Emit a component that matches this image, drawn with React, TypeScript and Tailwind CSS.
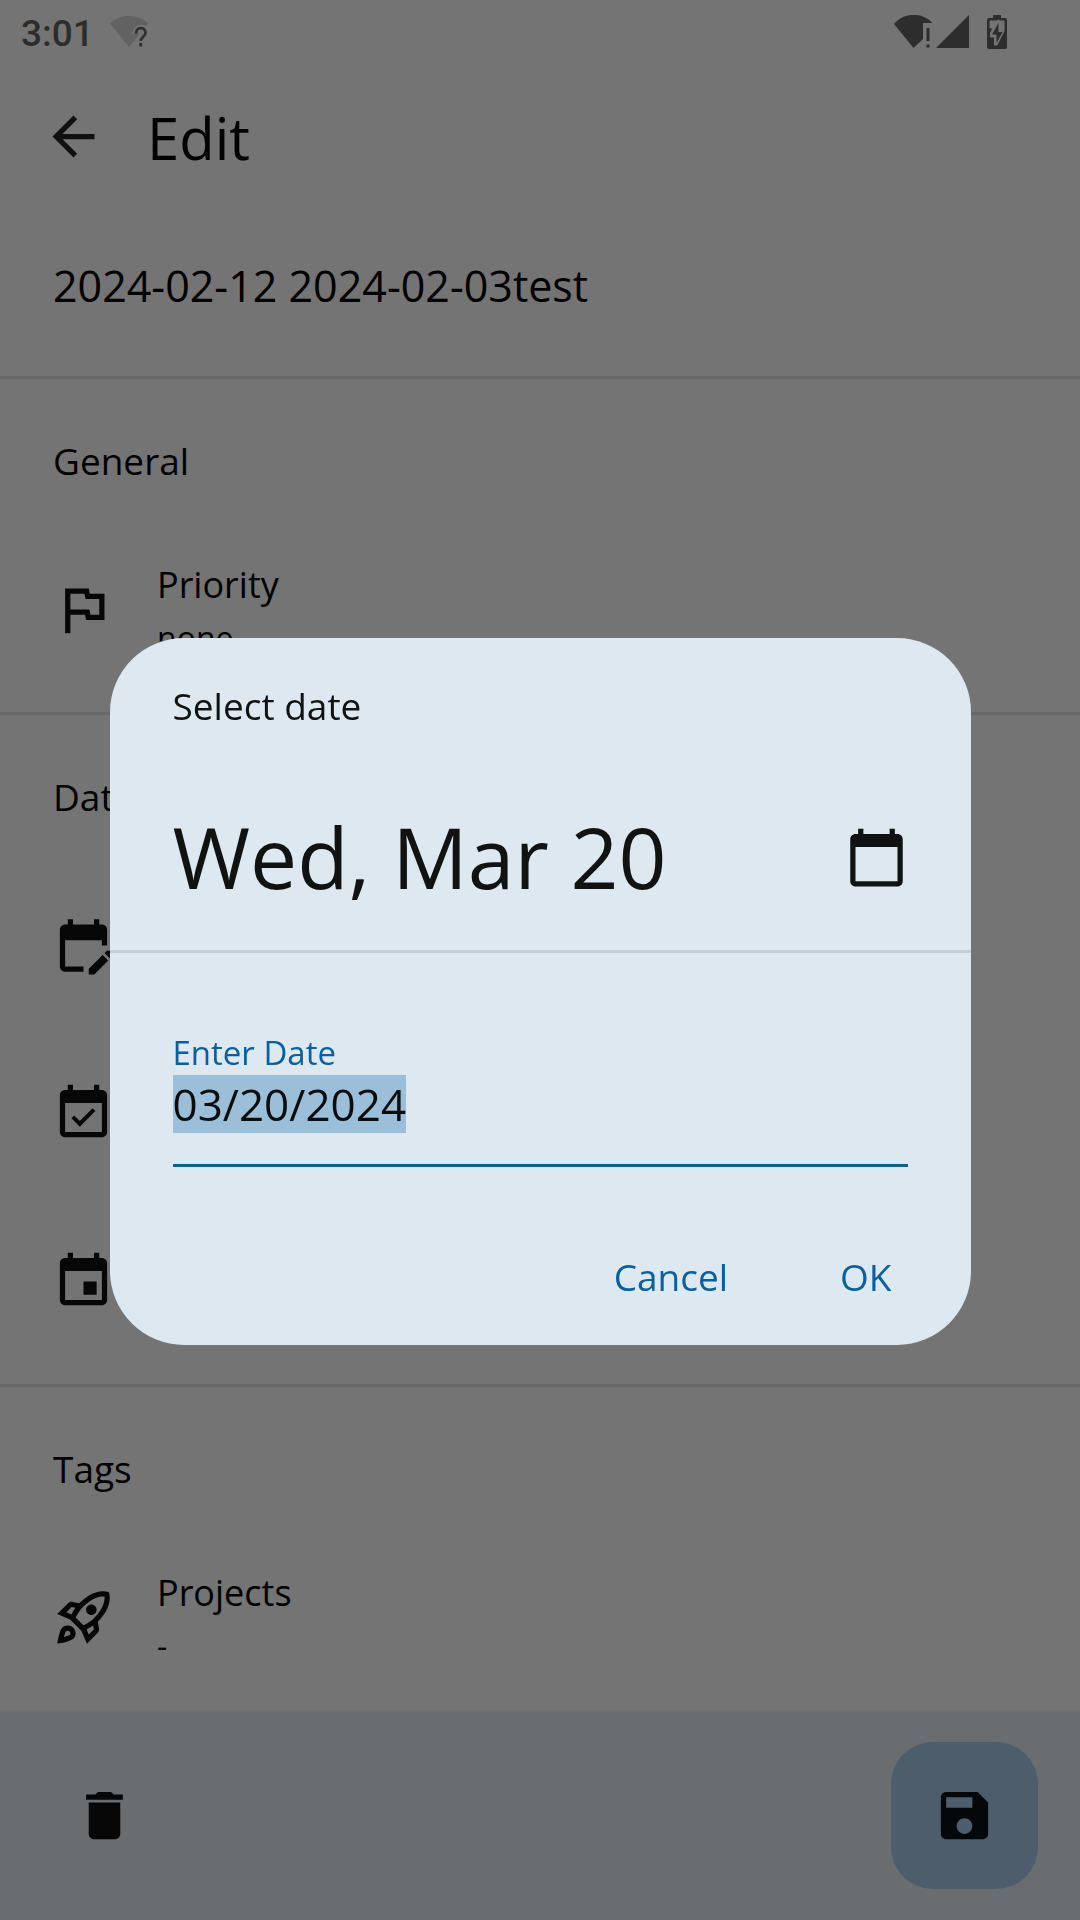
import { useEffect, useRef, useState } from "react";
import type { ReactNode } from "react";

const paths = {
  back: "M20 11H7.83l5.59-5.59L12 4l-8 8 8 8 1.41-1.41L7.83 13H20v-2z",
  flag: "M12.36 6l.4 2H18v6h-3.36l-.4-2H7V6h5.36M14 4H5v17h2v-7h5.6l.4 2h7V6h-5.6L14 4z",
  editCalendar:
    "M12 22H5c-1.11 0-2-.9-2-2L3.01 6c0-1.1.88-2 1.99-2h1V2h2v2h8V2h2v2h1c1.1 0 2 .9 2 2v6h-2v-2H5v10h7v2zm10.13-5.01l.71-.71c.39-.39.39-1.02 0-1.41l-.71-.71c-.39-.39-1.02-.39-1.41 0l-.71.71 2.12 2.12zm-.71.71l-5.3 5.3H14v-2.12l5.3-5.3 2.12 2.12z",
  eventAvailable:
    "M16.53 11.06L15.47 10l-4.88 4.88-2.12-2.12-1.06 1.06L10.59 17l5.94-5.94zM19 3h-1V1h-2v2H8V1H6v2H5c-1.11 0-1.99.9-1.99 2L3 19c0 1.1.89 2 2 2h14c1.1 0 2-.9 2-2V5c0-1.1-.9-2-2-2zm0 16H5V8h14v11z",
  event:
    "M17 12h-5v5h5v-5zM16 1v2H8V1H6v2H5c-1.11 0-1.99.9-1.99 2L3 19c0 1.1.89 2 2 2h14c1.1 0 2-.9 2-2V5c0-1.1-.9-2-2-2h-1V1h-2zm3 18H5V8h14v11z",
  calendar:
    "M20 3h-1V1h-2v2H7V1H5v2H4c-1.1 0-2 .9-2 2v16c0 1.1.9 2 2 2h16c1.1 0 2-.9 2-2V5c0-1.1-.9-2-2-2zm0 18H4V8h16v13z",
  trash: "M6 19c0 1.1.9 2 2 2h8c1.1 0 2-.9 2-2V7H6v12zM19 4h-3.5l-1-1h-5l-1 1H5v2h14V4z",
  save: "M17 3H5c-1.11 0-2 .9-2 2v14c0 1.1.89 2 2 2h14c1.1 0 2-.9 2-2V7l-4-4zm-5 16c-1.66 0-3-1.34-3-3s1.34-3 3-3 3 1.34 3 3-1.34 3-3 3zm3-10H5V5h10v4z",
  rocket:
    "M6 15c-.83 0-1.58.34-2.12.88C2.7 17.06 2 22 2 22s4.94-.7 6.12-1.88C8.66 19.58 9 18.83 9 18c0-1.66-1.34-3-3-3zm.71 3.71c-.28.28-2.17.76-2.17.76s.47-1.88.76-2.17c.17-.19.42-.3.7-.3.55 0 1 .45 1 1 0 .28-.11.53-.29.71zM17.42 13.65c6.36-6.36 4.24-11.31 4.24-11.31s-4.95-2.12-11.31 4.24l-2.49-.5c-.65-.13-1.33.08-1.81.55L2 10.69l5 2.14L11.17 17l2.14 5 4.05-4.05c.47-.47.68-1.15.55-1.81l-.49-2.49zM7.41 10.83l-1.91-.82 1.97-1.97 1.44.29c-.57.83-1.08 1.7-1.5 2.5zm6.58 7.67l-.82-1.91c.8-.42 1.67-.93 2.49-1.5l.29 1.44-1.96 1.97zM16 12.24c-1.32 1.32-3.38 2.4-4.04 2.73l-2.93-2.93c.32-.65 1.4-2.71 2.73-4.04 4.68-4.68 8.23-3.99 8.23-3.99s.69 3.55-3.99 8.23zM15 11c1.1 0 2-.9 2-2s-.9-2-2-2-2 .9-2 2 .9 2 2 2z",
};

function Icon({ name }: { name: keyof typeof paths }) {
  return (
    <svg viewBox="0 0 24 24" className="size-[63px] shrink-0" fill="currentColor" aria-hidden="true">
      <path d={paths[name]} />
    </svg>
  );
}

function StatusBar() {
  return (
    <div className="flex h-[63px] items-center pr-[73px] pl-[21px] text-[#2d2d2d]">
      <span className="pt-1 font-[Roboto,sans-serif] text-[37px] leading-[44px] font-medium">3:01</span>
      <svg width="38" height="32" viewBox="0 0 38 32" className="ml-[16px]" aria-hidden="true">
        <path d="M0 7.500C10-2.500 28-2.500 38 7.500L19 31Z" fill="#626262" />
        <path
          d="M26 17.500c0-7 9.500-7 9.500-.8 0 4.200-4.800 4.300-4.800 8.800"
          stroke="#747474"
          strokeWidth="7"
          fill="none"
        />
        <path
          d="M26 17.500c0-7 9.500-7 9.500-.8 0 4.200-4.800 4.300-4.800 8.300M30.700 27v3.500"
          stroke="#303030"
          strokeWidth="2.800"
          fill="none"
        />
      </svg>
      <svg width="38" height="33" viewBox="0 0 38 33" className="ml-auto" fill="currentColor" aria-hidden="true">
        <path d="M0 9C10-3 28-3 38 7.500V8H29v16L19.500 33Z" />
        <path d="M32.500 13h3v13h-3zM32.500 29.500h3v3h-3z" />
      </svg>
      <svg width="33" height="33" viewBox="0 0 33 33" className="ml-1" fill="currentColor" aria-hidden="true">
        <path d="M33 0v33H0Z" />
      </svg>
      <svg width="20" height="34" viewBox="0 0 20 34" className="ml-[18px]" aria-hidden="true">
        <path
          d="M6 0h8v3h4a2 2 0 0 1 2 2v27a2 2 0 0 1-2 2H2a2 2 0 0 1-2-2V5a2 2 0 0 1 2-2h4z"
          fill="currentColor"
        />
        <path
          d="M3 6H9.500L12 5V6H17V16L10 30H7.500V22H3.500V18L6 13H3Z"
          fill="#747474"
          stroke="#747474"
          strokeLinejoin="round"
        />
        <path d="M11.500 8 5 19.500h4.500v8.500L15.500 17h-4z" fill="currentColor" />
      </svg>
    </div>
  );
}

function Section({ title, children }: { title: string; children: ReactNode }) {
  return (
    <section className="border-t-3 border-[#686868] pb-[19px]">
      <h2 className="px-[53px] pt-14 pb-[38px] text-[37px] leading-[52px]">{title}</h2>
      {children}
    </section>
  );
}

interface RowProps {
  icon: keyof typeof paths;
  name: string;
  label?: string;
  value?: string;
}

function Row({ icon, name, label, value }: RowProps) {
  return (
    <button
      type="button"
      aria-label={label ? undefined : name}
      className="flex h-[168px] w-full items-center gap-[42px] px-[52px] text-left"
    >
      <span className="text-[#070707]">
        <Icon name={icon} />
      </span>
      {label && (
        <span className="flex flex-col">
          <span className="text-[36px] leading-[58px]">{label}</span>
          <span className="text-[32px] leading-[48px]">{value}</span>
        </span>
      )}
    </button>
  );
}

function DateDialog() {
  const input = useRef<HTMLInputElement>(null);
  const [date, setDate] = useState("03/20/2024");

  useEffect(() => {
    input.current?.focus();
    input.current?.select();
  }, []);

  return (
    <div className="fixed inset-0 flex items-center justify-center px-4 pt-[63px]">
      <div
        role="dialog"
        aria-modal="true"
        aria-labelledby="dialog-title"
        className="w-full max-w-[861px] rounded-[74px] bg-[#dee8f1] text-[#111312]"
      >
        <h2 id="dialog-title" className="px-[63px] pt-[42px] text-[37px] leading-[52px]">
          Select date
        </h2>
        <div className="flex items-center justify-between border-b-3 border-[#c3ced7] px-[63px] pt-[68px] pb-[36px]">
          <p className="text-[84px] leading-[114px]">Wed, Mar 20</p>
          <button type="button" aria-label="Switch to calendar">
            <Icon name="calendar" />
          </button>
        </div>
        <div className="px-[63px] pt-[78px]">
          <div className="border-b-3 border-[#0860a0] pb-[31px]">
            <label htmlFor="date" className="block text-[33px] leading-[44px] text-[#0860a0]">
              Enter Date
            </label>
            <input
              id="date"
              ref={input}
              type="text"
              value={date}
              onChange={(e) => setDate(e.target.value)}
              className="block w-full bg-transparent text-[44px] leading-[58px] text-[#0a0c0d] caret-transparent outline-none selection:bg-[#005fa4]/30 selection:text-[#0a0c0d]"
            />
          </div>
        </div>
        <div className="flex justify-end gap-12 pt-[84px] pr-[47px] pb-[42px] text-[37px] leading-[52px] text-[#0860a0]">
          <button type="button" className="px-8">
            Cancel
          </button>
          <button type="button" className="px-8">
            OK
          </button>
        </div>
      </div>
    </div>
  );
}

export default function App() {
  return (
    <div className="flex min-h-screen flex-col bg-[#747474] font-['Open_Sans',sans-serif] text-black">
      <StatusBar />
      <header className="flex h-[147px] items-center gap-[42px] px-[42px]">
        <button type="button" aria-label="Back" className="text-[#101010]">
          <Icon name="back" />
        </button>
        <h1 className="pt-0.5 text-[58px] leading-[80px]">Edit</h1>
      </header>
      <main>
        <p className="px-[53px] pt-[49px] pb-[63px] text-[43px] leading-[54px]">2024-02-12 2024-02-03test</p>
        <Section title="General">
          <Row icon="flag" name="Priority" label="Priority" value="none" />
        </Section>
        <Section title="Dates">
          <Row icon="editCalendar" name="Creation date" />
          <Row icon="eventAvailable" name="Completion date" />
          <Row icon="event" name="Due date" />
        </Section>
        <section className="border-t-3 border-[#686868] pb-[9px]">
          <h2 className="px-[53px] pt-14 pb-[38px] text-[37px] leading-[52px]">Tags</h2>
          <Row icon="rocket" name="Projects" label="Projects" value="-" />
        </section>
      </main>
      <footer className="mt-auto flex h-[210px] items-center justify-between bg-[#696d70] pr-[42px] pl-[73px]">
        <button type="button" aria-label="Delete" className="text-[#070707]">
          <Icon name="trash" />
        </button>
        <button
          type="button"
          aria-label="Save"
          className="flex size-[147px] items-center justify-center rounded-[42px] bg-[#4d5d6c] text-[#05080a]"
        >
          <Icon name="save" />
        </button>
      </footer>
      <DateDialog />
    </div>
  );
}
